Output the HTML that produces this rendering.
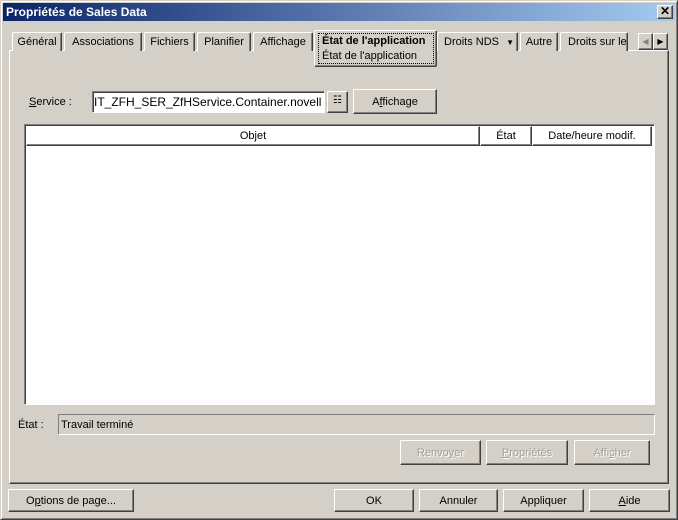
<!DOCTYPE html><html><head><style>
*{box-sizing:border-box}
body{margin:0;width:678px;height:520px;background:#d4d0c8;font-family:"Liberation Sans",sans-serif;font-size:11px;color:#000;position:relative;overflow:hidden}
.a{position:absolute}
.win{left:0;top:0;width:678px;height:520px;border:1px solid;border-color:#d4d0c8 #404040 #404040 #d4d0c8;box-shadow:inset 1px 1px #fff,inset -1px -1px #808080}
.title{left:3px;top:3px;width:672px;height:18px;background:linear-gradient(90deg,#0a246a,#a6caf0);color:#fff;font-weight:bold;font-size:12px;line-height:19px;padding-left:3px}
.btn{border:1px solid;border-color:#fff #404040 #404040 #fff;box-shadow:inset -1px -1px #808080;text-align:center;background:#d4d0c8}
.tab{top:32px;height:19px;border:1px solid;border-bottom:none;border-color:#fff #404040 #404040 #fff;border-radius:2px 2px 0 0;box-shadow:inset -1px 0 #808080;text-align:center;line-height:19px;font-size:11px;background:#d4d0c8}
.sunk{border:1px solid;border-color:#808080 #fff #fff #808080;box-shadow:inset 1px 1px #404040}
.hd{top:126px;height:20px;border:1px solid;border-color:#fff #404040 #404040 #fff;box-shadow:inset -1px -1px #808080;text-align:center;line-height:19px}
.dis{color:#a0a0a0;text-shadow:1px 1px #fff}
</style></head><body>
<div class="a win"></div>
<div class="a title">Propriétés de Sales Data</div>
<div class="a btn" style="left:657px;top:5px;width:16px;height:14px;font-size:12px;line-height:11px;font-weight:bold">✕</div>
<div class="a" style="left:9px;top:50px;width:660px;height:434px;border:1px solid;border-color:#fff #404040 #404040 #fff;box-shadow:inset -1px -1px #808080"></div>
<div class="a tab" style="left:12px;width:50px">Général</div>
<div class="a tab" style="left:64px;width:78px">Associations</div>
<div class="a tab" style="left:144px;width:51px">Fichiers</div>
<div class="a tab" style="left:197px;width:54px">Planifier</div>
<div class="a tab" style="left:253px;width:60px">Affichage</div>
<div class="a tab" style="left:437px;width:81px;text-align:left;padding-left:6px">Droits NDS <span style="font-size:8px;margin-left:4px">▼</span></div>
<div class="a tab" style="left:520px;width:38px">Autre</div>
<div class="a tab" style="left:560px;width:68px;overflow:hidden;white-space:nowrap;text-align:left;padding-left:7px">Droits sur le</div>
<div class="a btn" style="left:638px;top:33px;width:15px;height:17px;font-size:8px;line-height:15px;color:#808080">◀</div>
<div class="a btn" style="left:653px;top:33px;width:15px;height:17px;font-size:8px;line-height:15px">▶</div>
<div class="a" style="left:314px;top:30px;width:123px;height:37px;background:#d4d0c8;border:1px solid;border-color:#fff #404040 #404040 #fff;border-radius:2px;box-shadow:inset -1px -1px #808080"></div>
<div class="a" style="left:318px;top:33px;width:116px;height:31px;border:1px dotted #000"></div>
<div class="a" style="left:322px;top:35px;font-weight:bold">État de l'application</div>
<div class="a" style="left:322px;top:50px">État de l'application</div>
<div class="a" style="left:29px;top:96px"><u>S</u>ervice :</div>
<div class="a sunk" style="left:92px;top:91px;width:233px;height:22px;background:#fff;overflow:hidden;white-space:nowrap;line-height:21px;font-size:12px;padding-left:1px">IT_ZFH_SER_ZfHService.Container.novell</div>
<div class="a btn" style="left:327px;top:91px;width:21px;height:22px;font-size:10px;line-height:18px">☷</div>
<div class="a btn" style="left:353px;top:89px;width:84px;height:25px;line-height:25px">A<u>f</u>fichage</div>
<div class="a sunk" style="left:24px;top:124px;width:631px;height:281px;background:#fff"></div>
<div class="a hd" style="left:26px;width:454px">Objet</div>
<div class="a hd" style="left:480px;width:52px">État</div>
<div class="a hd" style="left:532px;width:120px">Date/heure modif.</div>
<div class="a" style="left:18px;top:419px">État :</div>
<div class="a" style="left:58px;top:414px;width:597px;height:21px;border:1px solid;border-color:#808080 #fff #fff #808080;line-height:21px;padding-left:2px">Travail terminé</div>
<div class="a btn dis" style="left:400px;top:440px;width:81px;height:25px;line-height:25px">Renvo<u>y</u>er</div>
<div class="a btn dis" style="left:486px;top:440px;width:82px;height:25px;line-height:25px"><u>P</u>ropriétés</div>
<div class="a btn dis" style="left:574px;top:440px;width:76px;height:25px;line-height:25px">Affi<u>c</u>her</div>
<div class="a btn" style="left:8px;top:489px;width:126px;height:23px;line-height:23px">O<u>p</u>tions de page...</div>
<div class="a btn" style="left:334px;top:489px;width:80px;height:23px;line-height:23px">OK</div>
<div class="a btn" style="left:419px;top:489px;width:79px;height:23px;line-height:23px">Annuler</div>
<div class="a btn" style="left:503px;top:489px;width:81px;height:23px;line-height:23px">Appliquer</div>
<div class="a btn" style="left:589px;top:489px;width:81px;height:23px;line-height:23px"><u>A</u>ide</div>
</body></html>
